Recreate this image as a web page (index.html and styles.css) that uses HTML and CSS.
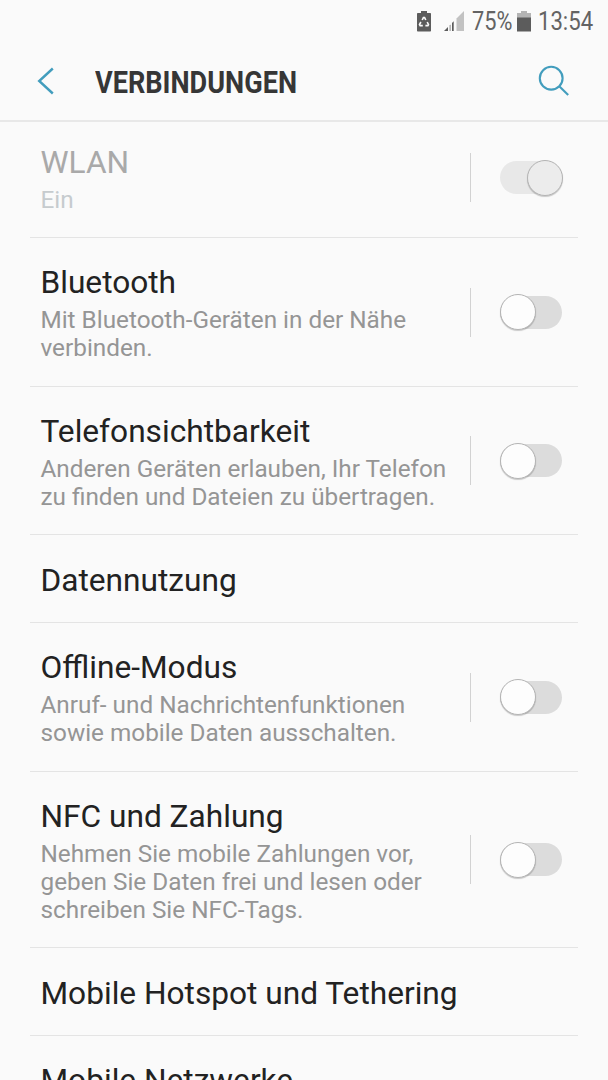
FILE: index.html
```html
<!DOCTYPE html>
<html lang="de">
<head>
    <meta charset="UTF-8">
    <meta name="viewport" content="width=device-width, initial-scale=1.0">
    <title>Verbindungen</title>
    <link rel="stylesheet" href="styles.css">
</head>
<body>
    <div class="statusbar">
        <svg class="saver-icon" width="14" height="21" viewBox="0 0 14 21">
            <path d="M4 0h6v2h3.2q.8 0 .8.8v16.9q0 .8-.8.8H.8q-.8 0-.8-.8V2.8Q0 2 .8 2H4z" fill="#5c5c5c"/>
            <path d="M5.2 9 6.4 6.6h1.2L8.8 9M10.2 11l1.3 2.6-.6 1H8.4M5.8 14.6H3.1l-.6-1L3.9 11" fill="none" stroke="#fafafa" stroke-width="1.6"/>
        </svg>
        <svg class="signal-icon" width="20" height="20" viewBox="0 0 20 20">
            <path d="M0 20 4 16V20zM8 12 9.7 10.3V20H8z" fill="#5c5c5c"/>
            <path d="M5.6 14.4 6.6 13.4V20H5.6z" fill="#8c8c8c"/>
            <path d="M12.5 7.5 20 0v20h-7.5z" fill="#c2c2c2"/>
        </svg>
        <span class="percent"><span class="condensed">75%</span></span>
        <svg class="battery-icon" width="14" height="21" viewBox="0 0 14 21">
            <path d="M4 0h6v2h4v5H0V2h4z" fill="#b4b4b4"/>
            <path d="M0 6.5h14v14H0z" fill="#5c5c5c"/>
        </svg>
        <span class="clock"><span class="condensed">13:54</span></span>
    </div>

    <header class="header">
        <svg class="back-icon" width="18" height="28" viewBox="0 0 18 28">
            <path d="M15.8 1.5 2.2 14l13.6 12.5" fill="none" stroke="#429dbd" stroke-width="2.4"/>
        </svg>
        <h1><span>VERBINDUNGEN</span></h1>
        <svg class="search-icon" width="32" height="32" viewBox="0 0 32 32">
            <circle cx="13.2" cy="13.2" r="11.4" fill="none" stroke="#429dbd" stroke-width="2.1"/>
            <path d="M21.5 21.5 30.2 30" fill="none" stroke="#429dbd" stroke-width="2.1"/>
        </svg>
    </header>

    <main class="list">
        <div class="row disabled">
            <div class="text">
                <div class="title">WLAN</div>
                <div class="summary">Ein</div>
            </div>
            <div class="divider"></div>
            <div class="switch on"></div>
        </div>
        <div class="row">
            <div class="text">
                <div class="title">Bluetooth</div>
                <div class="summary">Mit Bluetooth-Geräten in der Nähe<br>verbinden.</div>
            </div>
            <div class="divider"></div>
            <div class="switch"></div>
        </div>
        <div class="row">
            <div class="text">
                <div class="title">Telefonsichtbarkeit</div>
                <div class="summary">Anderen Geräten erlauben, Ihr Telefon<br>zu finden und Dateien zu übertragen.</div>
            </div>
            <div class="divider"></div>
            <div class="switch"></div>
        </div>
        <div class="row">
            <div class="text">
                <div class="title">Datennutzung</div>
            </div>
        </div>
        <div class="row">
            <div class="text">
                <div class="title">Offline-Modus</div>
                <div class="summary">Anruf- und Nachrichtenfunktionen<br>sowie mobile Daten ausschalten.</div>
            </div>
            <div class="divider"></div>
            <div class="switch"></div>
        </div>
        <div class="row">
            <div class="text">
                <div class="title">NFC und Zahlung</div>
                <div class="summary">Nehmen Sie mobile Zahlungen vor,<br>geben Sie Daten frei und lesen oder<br>schreiben Sie NFC-Tags.</div>
            </div>
            <div class="divider"></div>
            <div class="switch"></div>
        </div>
        <div class="row">
            <div class="text">
                <div class="title">Mobile Hotspot und Tethering</div>
            </div>
        </div>
        <div class="row">
            <div class="text">
                <div class="title">Mobile Netzwerke</div>
            </div>
        </div>
    </main>
</body>
</html>
```
FILE: styles.css
```css
*,
*::before {
    box-sizing: border-box;
}

body {
    margin: 0;
    height: 1080px;
    overflow: hidden;
    background: #fafafa;
    font-family: Roboto, "Liberation Sans", sans-serif;
    color: #222;
}

svg {
    display: block;
    flex: none;
}

/* status bar */
.statusbar {
    display: flex;
    justify-content: flex-end;
    align-items: flex-start;
    height: 42px;
    padding: 11px 14px 0 0;
    color: #636363;
    font-size: 25px;
    line-height: 22px;
}

.saver-icon {
    margin-right: 13px;
}

.signal-icon {
    margin-right: 8px;
}

.percent {
    width: 39px;
    margin-right: 6px;
}

.clock {
    width: 56px;
    margin-left: 7px;
}

.condensed {
    display: inline-block;
    transform: scaleX(0.87);
    transform-origin: left;
}

.clock .condensed {
    transform: scaleX(0.885);
}

/* title bar */
.header {
    display: flex;
    align-items: center;
    height: 80px;
    padding: 0 38px 0 37px;
    border-bottom: 2px solid #e8e8e8;
}

h1 {
    flex: 1;
    margin: 0 0 0 40px;
    padding-top: 4px;
    color: #363636;
    font-size: 31.5px;
    font-weight: 700;
    line-height: 38px;
}

h1 span {
    display: inline-block;
    transform: scaleX(0.86);
    transform-origin: left;
}

/* settings list */
.list {
    margin: -4.6px 30px 0;
}

.row {
    display: flex;
    align-items: center;
    padding: 23.8px 16px 23.2px 10.5px;
    border-bottom: 1px solid #e4e4e4;
}

.text {
    flex: 1;
    padding-top: 2.5px;
    white-space: nowrap;
}

.title {
    font-size: 31.65px;
    line-height: 37.2px;
}

.summary {
    margin-top: 4.8px;
    color: #959595;
    font-size: 24.3px;
    line-height: 28.1px;
}

.divider {
    width: 1px;
    height: 49px;
    margin-right: 29px;
    background: #d2d2d2;
}

.switch {
    position: relative;
    width: 62px;
    height: 33px;
    border-radius: 17px;
    background: #dcdcdc;
}

.switch::before {
    content: '';
    position: absolute;
    top: -1.5px;
    left: 0;
    width: 36px;
    height: 36px;
    border: 1px solid #b4b4b4;
    border-radius: 50%;
    background: #fdfdfd;
    box-shadow: 0 1px 1px rgba(0, 0, 0, 0.2);
}

.switch.on::before {
    left: 27px;
}

.disabled .title {
    color: #a9a9a9;
}

.disabled .summary {
    color: #c6cbce;
}

.disabled .switch {
    background: #e8e8e8;
}

.disabled .switch::before {
    background: #ececec;
}
```
